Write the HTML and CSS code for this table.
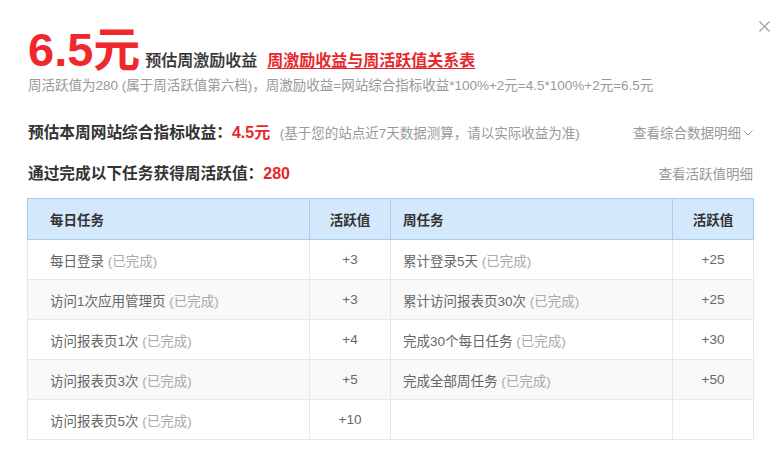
FILE: index.html
```html
<!DOCTYPE html>
<html lang="zh-CN">
<head>
<meta charset="utf-8">
<title>周激励收益</title>
<link rel="stylesheet" href="styles.css">
</head>
<body>
<div class="dialog">
  <button class="close" aria-label="关闭">
    <svg width="11" height="11" viewBox="0 0 11 11"><path d="M0.5 0.5L10.5 10.5M10.5 0.5L0.5 10.5" stroke="#999" stroke-width="1.2" fill="none"/></svg>
  </button>
  <div class="title-row">
    <span class="big">6.5元</span>
    <span class="title-label">预估周激励收益</span>
    <a class="title-link" href="#">周激励收益与周活跃值关系表</a>
  </div>
  <div class="formula">周活跃值为280 (属于周活跃值第六档)，周激励收益=网站综合指标收益*100%+2元=4.5*100%+2元=6.5元</div>

  <div class="info-row first">
    <div class="info-left">
      <span class="info-label">预估本周网站综合指标收益：</span><span class="info-value">4.5元</span>
      <span class="info-note">(基于您的站点近7天数据测算，请以实际收益为准)</span>
    </div>
    <a class="info-link" href="#">查看综合数据明细<svg class="chev" width="10" height="6" viewBox="0 0 10 6"><path d="M0.5 0.5L5 5L9.5 0.5" stroke="#999" stroke-width="1" fill="none"/></svg></a>
  </div>
  <div class="info-row second">
    <div class="info-left">
      <span class="info-label">通过完成以下任务获得周活跃值：</span><span class="info-value">280</span>
    </div>
    <a class="info-link" href="#">查看活跃值明细</a>
  </div>

  <table class="tasks">
    <colgroup>
      <col class="c-task"><col class="c-val"><col class="c-task"><col class="c-val">
    </colgroup>
    <thead>
      <tr><th class="t-left">每日任务</th><th>活跃值</th><th class="t-left t-week">周任务</th><th>活跃值</th></tr>
    </thead>
    <tbody>
      <tr><td class="t-left">每日登录 <span class="done">(已完成)</span></td><td>+3</td><td class="t-left t-week">累计登录5天 <span class="done">(已完成)</span></td><td>+25</td></tr>
      <tr class="alt"><td class="t-left">访问1次应用管理页 <span class="done">(已完成)</span></td><td>+3</td><td class="t-left t-week">累计访问报表页30次 <span class="done">(已完成)</span></td><td>+25</td></tr>
      <tr><td class="t-left">访问报表页1次 <span class="done">(已完成)</span></td><td>+4</td><td class="t-left t-week">完成30个每日任务 <span class="done">(已完成)</span></td><td>+30</td></tr>
      <tr class="alt"><td class="t-left">访问报表页3次 <span class="done">(已完成)</span></td><td>+5</td><td class="t-left t-week">完成全部周任务 <span class="done">(已完成)</span></td><td>+50</td></tr>
      <tr><td class="t-left">访问报表页5次 <span class="done">(已完成)</span></td><td>+10</td><td class="t-left t-week"></td><td></td></tr>
    </tbody>
  </table>
</div>
</body>
</html>
```

FILE: styles.css
```css
* { box-sizing: border-box; }
html, body { margin: 0; padding: 0; background: #fff; }
body {
  font-family: "Liberation Sans", "Noto Sans CJK SC", sans-serif;
  color: #333;
  width: 782px;
  height: 473px;
  overflow: hidden;
}
.dialog {
  position: relative;
  padding: 27px 29px 0 28px;
}
.close {
  position: absolute;
  top: 21px;
  left: 759px;
  width: 11px;
  height: 11px;
  padding: 0;
  border: 0;
  background: none;
  display: block;
}
.close svg { display: block; }
.title-row {
  display: flex;
  align-items: baseline;
  height: 46px;
}
.big {
  font-size: 47px;
  line-height: 46px;
  font-weight: bold;
  color: #f0282d;
}
.title-label {
  font-size: 16px;
  color: #333;
  margin-left: 5px;
  font-weight: 500;
  -webkit-text-stroke: 0.2px #333;
}
.title-link {
  font-size: 16px;
  font-weight: bold;
  color: #e8272c;
  margin-left: 10px;
  text-decoration: underline;
  text-decoration-thickness: 1px;
  text-underline-offset: 2px;
}
.formula {
  margin-top: 3px;
  font-size: 13.5px;
  line-height: 20px;
  color: #999;
}
.info-row {
  display: flex;
  justify-content: space-between;
  align-items: baseline;
  line-height: 22px;
}
.info-row.first { margin-top: 26px; }
.info-row.second { margin-top: 18px; }
.info-label {
  font-size: 15.7px;
  font-weight: bold;
  color: #333;
}
.info-value {
  font-size: 16px;
  font-weight: bold;
  color: #e8272c;
}
.info-note {
  font-size: 13.5px;
  color: #999;
  margin-left: 5px;
}
.info-link {
  font-size: 13.5px;
  color: #999;
  text-decoration: none;
}
.chev { margin-left: 2px; vertical-align: 2px; }
.tasks {
  margin: 12px 0 0 -1px;
  width: 726px;
  border-collapse: collapse;
  table-layout: fixed;
  font-size: 13.5px;
}
.c-task { width: 282px; }
.c-val { width: 81px; }
.tasks th {
  background: #d3e8fb;
  border: 1px solid #a6cdee;
  height: 41px;
  font-weight: bold;
  color: #333;
  text-align: center;
  padding: 0;
}
.tasks td {
  border: 1px solid #e8e8e8;
  height: 40px;
  color: #666;
  text-align: center;
  padding: 0;
}
.tasks .t-left { text-align: left; padding-left: 22px; }
.tasks .t-week { padding-left: 12px; }
.tasks tr.alt td { background: #f9f9f9; }
.done { color: #aaa; }
```
